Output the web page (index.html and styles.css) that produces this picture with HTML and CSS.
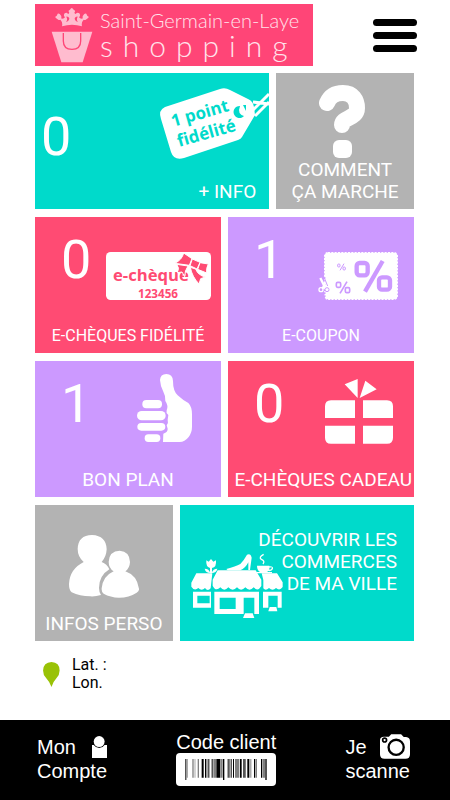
FILE: index.html
```html
<!DOCTYPE html>
<html lang="fr">
<head>
    <meta charset="UTF-8">
    <meta name="viewport" content="width=device-width, initial-scale=1.0">
    <title>Saint-Germain-en-Laye Shopping</title>
    <link rel="stylesheet" href="styles.css">
</head>
<body>
    <!-- Header -->
    <header class="header">
        <a href="#" class="logo">
            <svg class="logo-bag" viewBox="62 16 126 168" aria-hidden="true">
                <path d="M64 90H186L157 182H93Z"/>
                <path d="M99 94V118Q99 143 125 143Q151 143 151 118V94" fill="none" stroke="#ff4577" stroke-width="4"/>
                <path d="M95 74Q98 62 90 54Q84 57 81 52Q74 49 75 45Q80 43 82 36Q88 34 91 41Q95 45 92 50Q99 54 104 47Q98 42 103 35Q109 30 113 37Q118 36 116 31Q112 27 119 24Q124 14 130 24Q137 27 133 31Q131 36 136 37Q141 30 147 35Q152 42 146 47Q151 54 158 50Q155 45 159 41Q162 34 168 36Q170 43 175 45Q176 49 169 52Q166 57 160 54Q152 62 155 74Q125 64 95 74Z"/>
                <path d="M107 61Q116 60 117 50Q114 44 108 45Q113 54 107 61ZM143 61Q134 60 133 50Q136 44 142 45Q137 54 143 61Z" fill="#ff4577"/>
            </svg>
            <span class="logo-text">
                <span class="logo-city">Saint-Germain-en-Laye</span>
                <span class="logo-name">shopping</span>
            </span>
        </a>
        <button type="button" class="menu-btn" aria-label="Menu">
            <span></span>
            <span></span>
            <span></span>
        </button>
    </header>

    <!-- Tiles -->
    <main class="content">
        <div class="row">
            <a href="#" class="tile tile-wide cyan points">
                <div class="tile-main">
                    <span class="number">0</span>
                    <svg class="icon icon-tag" viewBox="0 0 120 90" aria-hidden="true">
                        <path d="M104 29L120 31M100 41L120 21M106 43L120 29" stroke="#fff" stroke-width="3" fill="none"/>
                        <path d="M16 34L71 16Q76 14 81 17L99 26Q104 28 105 34L106 42L93 64Q92 66 89 67L35 85Q25 88 22 79L12 46Q9 37 16 34Z" fill="#fff"/>
                        <path d="M91 33A6 6 0 1 0 95 43Q88 41 91 33ZM94 32L97 38L97 32Z" fill="#00dacb"/>
                        <g class="tag-text" fill="#00dacb">
                            <text transform="translate(24 54) rotate(-16)">1 point</text>
                            <text transform="translate(30 74) rotate(-16)">fidélité</text>
                        </g>
                    </svg>
                </div>
                <span class="label label-right">+ INFO</span>
            </a>
            <a href="#" class="tile tile-narrow gray">
                <div class="tile-main centered">
                    <svg class="icon icon-help" viewBox="0 0 47 73" aria-hidden="true">
                        <path d="M8 18C11 11 16 8 24 8C34 8 38 15 38 23C38 34 23 32 23 40" fill="none" stroke="#fff" stroke-width="16" stroke-linecap="round"/>
                        <rect x="14" y="55" width="19" height="18" rx="6" fill="#fff"/>
                    </svg>
                </div>
                <span class="label">COMMENT<br>ÇA MARCHE</span>
            </a>
        </div>

        <div class="row">
            <a href="#" class="tile pink">
                <div class="tile-main">
                    <span class="number">0</span>
                    <svg class="icon icon-cheque" viewBox="228 120 315 144" aria-hidden="true">
                        <rect x="228" y="120" width="315" height="144" rx="14" fill="#fff"/>
                        <text class="cheque-text" x="249" y="208">e-chèque</text>
                        <text class="cheque-code" x="324" y="258">123456</text>
                        <g fill="#ff4b73" stroke="#fff" stroke-width="3">
                            <path d="M461 123L486 140L478 160L434 154Q456 144 461 123ZM510 152L535 156Q528 168 530 183L503 172Z"/>
                            <path d="M440 157L474 162Q464 176 464 194L456 180L442 182Q450 168 440 157ZM481 166L497 171Q504 190 526 195L512 200L507 216Q486 194 481 166Z"/>
                            <path d="M487 141L510 151L501 171L480 161Z"/>
                        </g>
                    </svg>
                </div>
                <span class="label label-small">E-CHÈQUES FIDÉLITÉ</span>
            </a>
            <a href="#" class="tile purple">
                <div class="tile-main">
                    <span class="number">1</span>
                    <svg class="icon icon-coupon" viewBox="278 120 240 144" aria-hidden="true">
                        <rect x="298" y="122" width="218" height="140" rx="10" fill="#fff" stroke="#fff" stroke-width="4" stroke-dasharray="6 4"/>
                        <g fill="none" stroke="#cc99ff" stroke-width="13">
                            <rect x="394" y="153" width="33" height="37" rx="9"/>
                            <rect x="461" y="196" width="33" height="37" rx="9"/>
                            <path d="M472 147L419 239"/>
                        </g>
                        <g fill="none" stroke="#cc99ff" stroke-width="5">
                            <rect x="333" y="211" width="13" height="15" rx="4"/>
                            <rect x="360" y="227" width="13" height="15" rx="4"/>
                            <path d="M365 209L344 244"/>
                        </g>
                        <g fill="none" stroke="#cc99ff" stroke-width="3">
                            <rect x="337" y="156" width="7" height="9" rx="3"/>
                            <rect x="353" y="165" width="7" height="9" rx="3"/>
                            <path d="M356 155L344 175"/>
                        </g>
                        <path d="M298 196V265" stroke="#cc99ff" stroke-width="5" stroke-dasharray="5 4"/>
                        <path d="M285 198L301 230M306 196L292 230" stroke="#fff" stroke-width="7"/>
                        <circle cx="287" cy="233" r="6" fill="none" stroke="#fff" stroke-width="4"/>
                        <circle cx="305" cy="233" r="6" fill="#fff" stroke="#cc99ff" stroke-width="3"/>
                        <path d="M298 200L307 222" stroke="#cc99ff" stroke-width="3"/>
                    </svg>
                </div>
                <span class="label label-small">E-COUPON</span>
            </a>
        </div>

        <div class="row">
            <a href="#" class="tile purple">
                <div class="tile-main">
                    <span class="number">1</span>
                    <svg class="icon icon-thumb" viewBox="322 57 165 204" fill="#fff" aria-hidden="true">
                        <path d="M400 261L401 236Q415 231 414 221L411 211Q417 204 414 194L416 180Q408 173 411 166Q417 152 407 138Q408 122 401 110Q392 93 391 75Q392 57 410 57Q429 57 430 78Q430 108 444 121Q460 136 476 144Q487 155 487 178V215Q487 232 477 246Q465 261 450 261Z"/>
                        <rect x="338" y="135" width="59" height="25" rx="12"/>
                        <rect x="322" y="168" width="86" height="28" rx="14"/>
                        <rect x="323" y="204" width="84" height="23" rx="12"/>
                        <rect x="345" y="238" width="47" height="23" rx="11"/>
                    </svg>
                </div>
                <span class="label">BON PLAN</span>
            </a>
            <a href="#" class="tile pink">
                <div class="tile-main">
                    <span class="number">0</span>
                    <svg class="icon icon-gift" viewBox="300 70 204 195" fill="#fff" aria-hidden="true">
                        <path d="M359 86L398 70V127ZM421 75L455 101L404 127Z"/>
                        <path d="M390 134V187H300V152Q300 134 318 134ZM414 134H486Q504 134 504 152V187H414Z"/>
                        <path d="M300 210H390V264H318Q300 264 300 246ZM414 210H504V246Q504 264 486 264H414Z"/>
                    </svg>
                </div>
                <span class="label label-end">E-CHÈQUES CADEAU</span>
            </a>
        </div>

        <div class="row">
            <a href="#" class="tile tile-narrow gray">
                <div class="tile-main centered">
                    <svg class="icon icon-people" viewBox="114 103 210 189" fill="#fff" aria-hidden="true">
                        <path d="M158 184Q140 168 140 145Q141 104 183 103Q226 105 227 146Q226 168 212 184Q228 190 235 206Q204 225 204 262Q204 274 210 283Q193 288 178 287Q146 287 122 275Q114 269 114 250Q116 205 158 184Z"/>
                        <path d="M248 212Q233 202 233 183Q235 151 266 150Q296 152 297 184Q296 203 283 212Q318 224 324 264Q325 271 317 276Q294 291 264 291Q238 290 218 279Q211 274 212 263Q216 226 248 212Z"/>
                    </svg>
                </div>
                <span class="label">INFOS PERSO</span>
            </a>
            <a href="#" class="tile tile-wide cyan">
                <div class="discover">
                    <svg class="icon icon-shops" viewBox="42 156 276 198" fill="#fff" aria-hidden="true">
                        <!-- side shops -->
                        <path d="M58 217H106L101 262Q92 272 84 261Q74 272 64 261Q52 271 43 257V245Z"/>
                        <path d="M48 272H102V320H48ZM61 284V307H98V284Z" fill-rule="evenodd"/>
                        <path d="M254 217H300L317 244V258Q308 271 297 261Q287 272 276 261Q266 271 259 262V237Z"/>
                        <path d="M258 272H314V320H302V284H274V320H258Z"/>
                        <path d="M278 318H298L301 331H274Z"/>
                        <!-- main shop -->
                        <path d="M122 208H236L253 236V255Q243 273 230 259Q218 273 205 259Q192 273 180 259Q167 273 154 259Q142 273 130 259Q116 273 107 254V236Z"/>
                        <path d="M112 272H246V339H232V290H200V339H112ZM128 290V324H176V290Z" fill-rule="evenodd"/>
                        <path d="M204 337H227L232 351H198Z"/>
                        <!-- tulip, shoe and cup -->
                        <path d="M88 178L95 182L102 174L109 182L117 178Q119 200 105 201V217H99V201Q86 198 88 178Z"/>
                        <path d="M83 203Q96 203 100 216Q86 216 83 203ZM121 203Q108 203 104 216Q118 216 121 203Z"/>
                        <path d="M148 204Q176 197 190 189Q202 176 210 161Q221 156 224 170L219 207H214V184Q205 202 190 208H152Z"/>
                        <path d="M240 194H277V196Q290 195 288 204Q284 212 274 210Q271 213 269 213H285V217H240V213H249Q240 207 240 194ZM277 200V206Q285 206 284 199Z"/>
                        <path d="M260 160Q244 169 253 175Q265 179 258 189" fill="none" stroke="#fff" stroke-width="4"/>
                    </svg>
                    <span class="label">DÉCOUVRIR LES<br>COMMERCES<br>DE MA VILLE</span>
                </div>
            </a>
        </div>

        <!-- Position -->
        <div class="position">
            <svg class="pin" viewBox="41 486 50 74" aria-hidden="true">
                <path d="M66 560Q62 546 50 533Q41 524 41 511Q42 487 66 486Q90 487 90 511Q90 524 81 533Q69 546 66 560Z" fill="#99c206"/>
            </svg>
            <div>Lat. :<br>Lon.</div>
        </div>
    </main>

    <!-- Bottom bar -->
    <nav class="bottom-bar">
        <a href="#" class="bar-link">
            <span class="bar-line">Mon
                <svg class="icon-user" viewBox="276 68 44 64" fill="#fff" aria-hidden="true">
                    <circle cx="297" cy="84" r="16"/>
                    <path d="M276 94H281Q288 103 297 103Q307 103 313 94H320V132H276Z"/>
                </svg>
            </span>
            <span>Compte</span>
        </a>
        <a href="#" class="bar-link bar-code">
            <span>Code client</span>
            <svg class="icon-barcode" viewBox="0 0 300 99" aria-hidden="true">
                <rect width="300" height="99" rx="12" fill="#fff"/>
                <path d="M28 18H31V81H28ZM77 18H83V74H77ZM87 18H91V74H87ZM97 18H100V74H97ZM107 18H110V74H107ZM121 18H133V74H121ZM141 18H145V81H141ZM155 18H158V74H155ZM164 18H167V74H164ZM171 18H174V74H171ZM192 18H197V74H192ZM202 18H206V74H202ZM214 18H220V74H214ZM234 18H238V74H234ZM255 18H259V74H255ZM268 18H272V81H268Z"/>
                <path d="M32 18H35V74H32ZM49 18H53V74H49ZM56 18H58V74H56ZM65 18H69V74H65ZM92 18H95V74H92ZM112 18H120V74H112ZM134 18H140V74H134ZM159 18H162V74H159ZM177 18H190V74H177ZM207 18H210V74H207ZM223 18H226V74H223ZM240 18H243V74H240ZM261 18H267V74H261Z" fill="#808080"/>
            </svg>
        </a>
        <a href="#" class="bar-link">
            <span class="bar-line">Je
                <svg class="icon-camera" viewBox="1138 57 91 75" aria-hidden="true">
                    <path d="M1138 76Q1138 65 1150 65H1165L1172 57H1202L1210 66H1217Q1229 67 1229 79V118Q1229 132 1215 132H1152Q1138 132 1138 118Z" fill="#fff"/>
                    <circle cx="1187" cy="97" r="23" fill="none" stroke="#000" stroke-width="7"/>
                    <circle cx="1152" cy="75" r="6" fill="#fff" stroke="#000" stroke-width="5"/>
                </svg>
            </span>
            <span>scanne</span>
        </a>
    </nav>
</body>
</html>
```

FILE: styles.css
```css
/* General */
* {
    box-sizing: border-box;
}

body {
    margin: 0;
    min-height: 100vh;
    display: flex;
    flex-direction: column;
    font-family: Roboto, sans-serif;
    background-color: #fff;
    color: #000;
}

a {
    color: inherit;
    text-decoration: none;
}

svg {
    display: block;
    flex-shrink: 0;
}

/* Header */
.header {
    display: flex;
    justify-content: space-between;
    align-items: center;
    padding: 4px 33px 0 35px;
}

.logo {
    display: flex;
    align-items: center;
    gap: 7px;
    width: 278px;
    height: 62px;
    padding-left: 16px;
    background-color: #ff4577;
    color: #ffe3eb;
}

.logo-bag {
    width: 42px;
    height: 56px;
    fill: #ffbccf;
}

.logo-text {
    display: flex;
    flex-direction: column;
    padding-bottom: 4px;
    font-family: Lato, sans-serif;
    font-weight: 300;
}

.logo-city {
    font-size: 20px;
    line-height: 24px;
}

.logo-name {
    font-size: 30px;
    line-height: 26px;
    letter-spacing: 10px;
}

.menu-btn {
    display: flex;
    flex-direction: column;
    gap: 6px;
    width: 44px;
    padding: 0;
    border: none;
    background: none;
    cursor: pointer;
}

.menu-btn span {
    height: 7px;
    border-radius: 4px;
    background-color: #000;
}

/* Tiles */
.content {
    display: flex;
    flex-direction: column;
    gap: 8px;
    padding: 7px 36px 0 35px;
}

.row {
    display: flex;
    gap: 7px;
}

.tile {
    flex: 1 1 0;
    min-width: 0;
    min-height: 136px;
    display: flex;
    flex-direction: column;
    padding-bottom: 6px;
    color: #fff;
}

.tile-wide {
    flex-grow: 17;
}

.tile-narrow {
    flex-grow: 10;
}

.cyan { background-color: #00dacb; }
.gray { background-color: #b3b3b3; }
.pink { background-color: #ff4b73; }
.purple { background-color: #cc99ff; }

.tile-main {
    flex: 1;
    display: flex;
    justify-content: space-between;
    align-items: flex-start;
}

.centered {
    justify-content: center;
}

.number {
    margin: 16px 0 0 26px;
    font-size: 54px;
    line-height: 54px;
}

.points .number {
    margin: 37px 0 0 6px;
}

.label {
    font-size: 19px;
    line-height: 22px;
    text-align: center;
    white-space: nowrap;
}

.label-small {
    font-size: 16px;
}

.label-right {
    padding-right: 13px;
    text-align: right;
}

.label-end {
    padding-right: 2px;
    text-align: right;
}

.discover {
    display: grid;
    padding: 24px 17px 0 11px;
}

.discover .icon,
.discover .label {
    grid-area: 1 / 1;
}

.discover .label {
    text-align: right;
}

/* Tile icons */
.icon-tag {
    width: 120px;
    height: 90px;
}

.icon-help {
    width: 47px;
    height: 73px;
    margin: 12px 6px 0 0;
}

.icon-cheque {
    width: 105px;
    height: 48px;
    margin: 35px 10px 0 0;
}

.icon-coupon {
    width: 80px;
    height: 48px;
    margin: 35px 16px 0 0;
}

.icon-thumb {
    width: 55px;
    height: 68px;
    margin: 13px 29px 0 0;
}

.icon-gift {
    width: 68px;
    height: 65px;
    margin: 18px 21px 0 0;
}

.icon-people {
    width: 70px;
    height: 63px;
    margin-top: 30px;
}

.icon-shops {
    width: 92px;
    height: 66px;
    margin-top: 24px;
}

.tag-text,
.cheque-text,
.cheque-code {
    font-family: "Open Sans", sans-serif;
    font-weight: bold;
}

.tag-text {
    font-size: 17px;
}

.cheque-text {
    font-size: 50px;
    fill: #ff4b73;
}

.cheque-code {
    font-size: 35px;
    fill: #ff4b73;
}

/* Position */
.position {
    display: flex;
    align-items: center;
    gap: 12px;
    padding: 7px 8px;
    font-size: 16px;
    line-height: 18px;
}

.pin {
    width: 17px;
    height: 25px;
}

/* Bottom bar */
.bottom-bar {
    display: flex;
    justify-content: space-between;
    align-items: center;
    min-height: 80px;
    margin-top: auto;
    padding: 0 40px 3px 37px;
    background-color: #000;
    color: #fff;
    font-family: "Liberation Sans", Arial, sans-serif;
    font-size: 20px;
    line-height: 24px;
}

.bar-link {
    display: flex;
    flex-direction: column;
}

.bar-line {
    display: flex;
    justify-content: space-between;
    align-items: center;
}

.bar-code {
    line-height: 22px;
}

.icon-user {
    width: 15px;
    height: 22px;
}

.icon-barcode {
    width: 100px;
    height: 33px;
}

.icon-camera {
    width: 30px;
    height: 25px;
}
```
